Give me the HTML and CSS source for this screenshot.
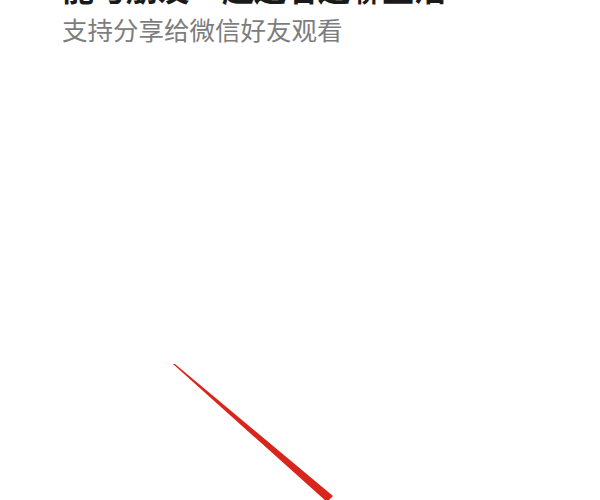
FILE: index.html
```html
<!DOCTYPE html>
<html lang="zh">
<head>
<meta charset="utf-8">
<link rel="stylesheet" href="styles.css">
</head>
<body>
<div class="page">
  <div class="intro">
    <h1 class="title">能与朋友一起边看边聊生活</h1>
    <p class="subtitle">支持分享给微信好友观看</p>
  </div>
</div>
<svg class="pointer" width="600" height="500" viewBox="0 0 600 500">
  <polygon points="173,364 175,364 333,496 327,502" fill="#d9261c"/>
</svg>
</body>
</html>
```
FILE: styles.css
```css
html, body {
  margin: 0;
  padding: 0;
  background: #ffffff;
}
body {
  width: 600px;
  height: 500px;
  overflow: hidden;
  position: relative;
  font-family: "Noto Sans CJK SC", "Noto Sans", sans-serif;
}
.page {
  padding-left: 62px;
}
.intro {
  margin-top: -29px;
}
.title {
  margin: 0;
  font-size: 32px;
  line-height: 32px;
  font-weight: 700;
  color: #1a1a1a;
  white-space: nowrap;
}
.subtitle {
  margin: 11px 0 0;
  font-size: 25.5px;
  line-height: 30px;
  color: #7d7d7d;
  white-space: nowrap;
}
.pointer {
  position: absolute;
  left: 0;
  top: 0;
}
```
